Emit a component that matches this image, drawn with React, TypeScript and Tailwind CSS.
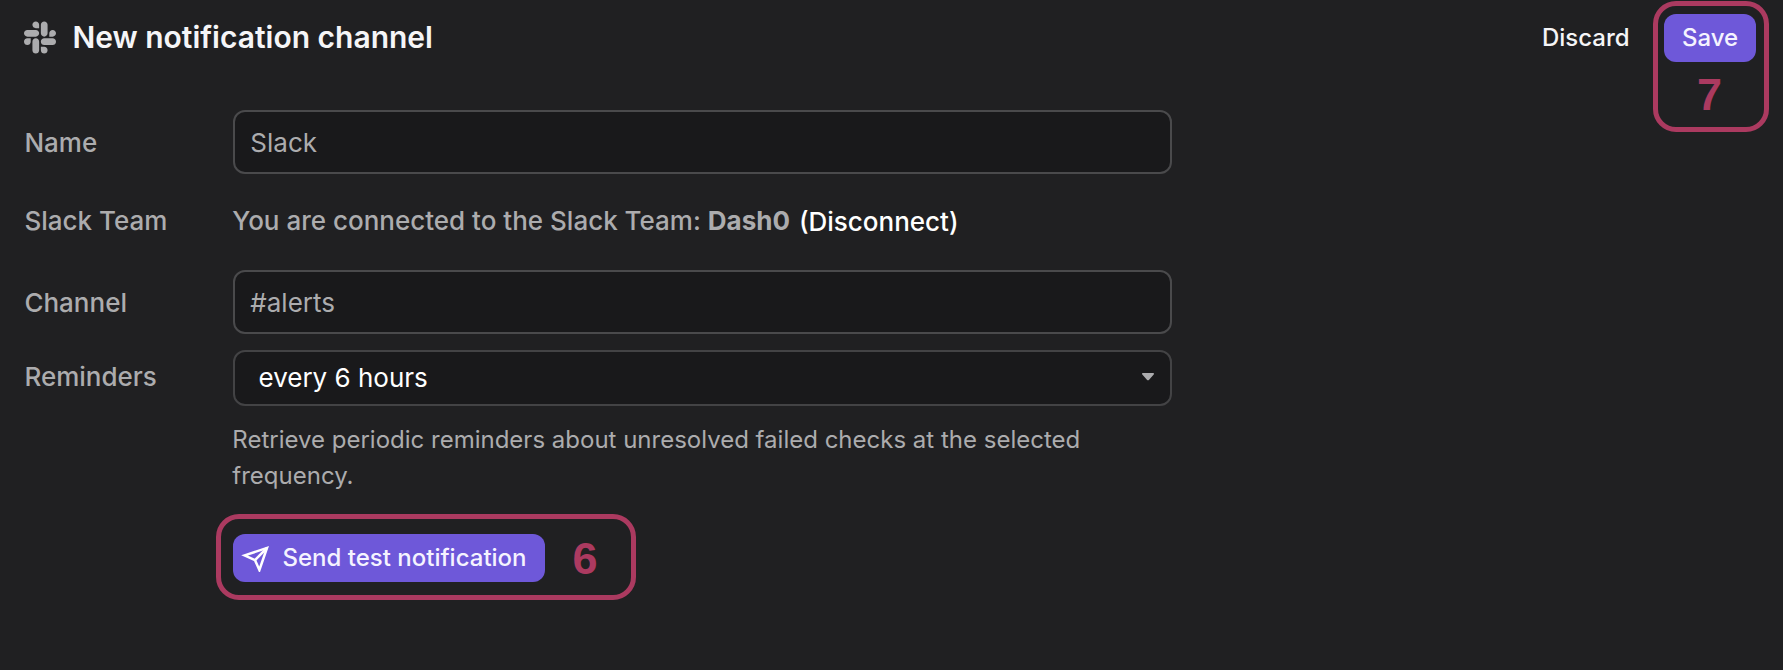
import type { ReactNode } from "react";
import { FaSlack } from "react-icons/fa";

interface FieldProps {
  label: string;
  className?: string;
  labelClassName?: string;
  children: ReactNode;
}

function Field({ label, className = "", labelClassName = "", children }: FieldProps) {
  return (
    <div className={`grid grid-cols-[209px_939px] ${className}`}>
      <label className={`pl-[0.4px] text-[26px] font-medium text-[#acacae] ${labelClassName}`}>
        {label}
      </label>
      {children}
    </div>
  );
}

function TextInput({ placeholder }: { placeholder: string }) {
  return (
    <input
      type="text"
      placeholder={placeholder}
      className="h-16 w-full rounded-xl border-2 border-[#4a4a4c] bg-[#19191b] px-[15.3px] text-[26px] text-white outline-none placeholder:text-[#acacae]"
    />
  );
}

function SendIcon() {
  return (
    <svg
      viewBox="0 0 28 28"
      className="size-7 shrink-0 text-white"
      fill="none"
      stroke="currentColor"
      strokeWidth="2.5"
    >
      <path d="M3.6 11.4 26 3.9 18.4 26 14 16.2Z" />
      <path d="M14 16.2 26 3.9" />
    </svg>
  );
}

export default function App() {
  return (
    <div className="h-[670px] w-[1783px] overflow-hidden bg-[#202022] font-[Inter,sans-serif]">
      <header className="flex h-[110px] items-start justify-between pl-6">
        <div className="flex h-[74px] items-center gap-[16.4px]">
          <FaSlack className="h-[37px] w-8 text-[#acacae]" />
          <h1 className="text-[30px] leading-[36px] font-semibold text-[#f5f5f7]">
            New notification channel
          </h1>
        </div>

        <div className="flex items-start pr-[14.3px]">
          <button className="mt-[14px] mr-[23.7px] h-12 text-2xl font-medium text-[#f5f5f7]">
            Discard
          </button>
          <div className="mt-[1.3px] flex h-[130.4px] w-[115.4px] flex-col items-start rounded-[23px] border-5 border-[#ab3a60] pt-[7.7px] pl-[5.7px]">
            <button className="h-12 w-[92px] rounded-xl bg-[#6e58d9] text-2xl font-medium text-[#f5f3ff]">
              Save
            </button>
            <span className="mt-2 ml-[33px] font-['Liberation_Sans',sans-serif] text-[45px] leading-[50px] font-bold text-[#ab3a60]">
              7
            </span>
          </div>
        </div>
      </header>

      <main className="pl-6">
        <Field label="Name" labelClassName="leading-[66px] h-16">
          <TextInput placeholder="Slack" />
        </Field>

        <Field label="Slack Team" className="h-24" labelClassName="pt-[31px] leading-8">
          <p className="-ml-[0.7px] flex pt-[31px] text-[26px] leading-8 font-medium whitespace-pre text-[#acacae]">
            You are connected to the Slack Team: <b className="font-bold">Dash0</b>
            <button className="mt-px ml-[9px] h-8 text-white">(Disconnect)</button>
          </p>
        </Field>

        <Field label="Channel" labelClassName="leading-[66px] h-16">
          <TextInput placeholder="#alerts" />
        </Field>

        <Field label="Reminders" className="mt-4" labelClassName="leading-[54px]">
          <div>
            <div className="flex h-14 items-center justify-between rounded-xl border-2 border-[#434345] bg-[#19191b] pr-4 pb-0.5 pl-[23.5px]">
              <span className="text-[26px] text-white">every 6 hours</span>
              <svg viewBox="0 0 12 8" className="h-2 w-3" fill="#acacae">
                <path d="M1 0h10c.9 0 1.3 1 .7 1.6l-4.8 5.3c-.5.6-1.3.6-1.8 0L.3 1.6C-.3 1 .1 0 1 0Z" />
              </svg>
            </div>

            <p className="mt-4 -ml-[0.7px] w-[880px] text-2xl leading-9 text-[#acacae]">
              Retrieve periodic reminders about unresolved failed checks at the selected frequency.
            </p>

            <div className="mt-5 -ml-[17px] flex h-[86px] w-[420px] items-start rounded-[23px] border-5 border-[#ab3a60] pt-[15px] pl-3">
              <button className="flex h-12 w-[312px] items-center rounded-xl bg-[#6e58d9] pl-2 text-2xl font-medium text-[#f5f3ff]">
                <SendIcon />
                <span className="ml-[13.5px] whitespace-nowrap">Send test notification</span>
              </button>
              <span className="ml-[27.6px] font-['Liberation_Sans',sans-serif] text-[45px] leading-[50px] font-bold text-[#ab3a60]">
                6
              </span>
            </div>
          </div>
        </Field>
      </main>
    </div>
  );
}
